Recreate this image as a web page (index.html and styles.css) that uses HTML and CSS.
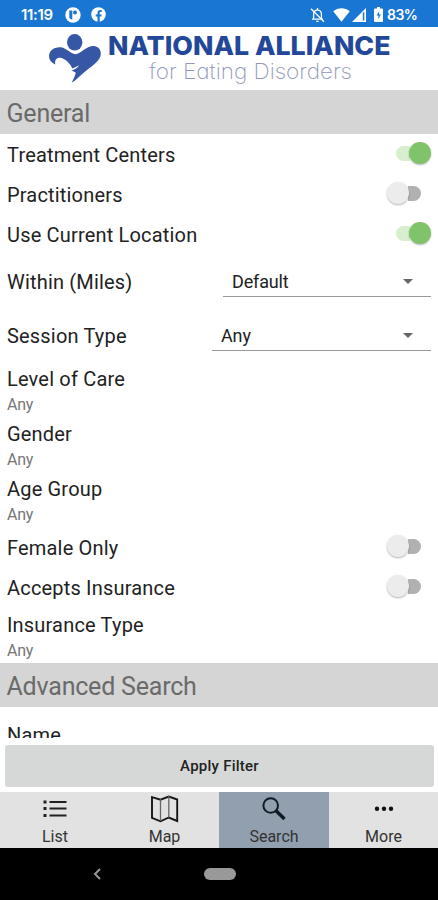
FILE: index.html
```html
<!DOCTYPE html>
<html lang="en">
<head>
<meta charset="utf-8">
<title>Search filters</title>
<link rel="stylesheet" href="styles.css">
</head>
<body>
<div class="app">
  <header class="status">
    <span class="clock">11:19</span>
    <svg class="badge-r" width="16" height="16" viewBox="0 0 16 16"><circle cx="8" cy="8" r="7.700" fill="#fff"/><path d="M4.300 3.400h3v9.300q-1.800-.3-3-1.700z" fill="#1976d2"/><circle cx="10" cy="5.600" r="2" fill="#1976d2"/></svg>
    <svg class="badge-f" width="15" height="15" viewBox="0 0 15 15"><circle cx="7.500" cy="7.500" r="7.300" fill="#fff"/><path d="M6.500 15V9.600H4.700V7.400h1.800V6c0-2 1.100-2.900 2.800-2.900h1.400v2H9.700c-.8 0-1 .4-1 1v1.300h2l-.3 2.200H8.700V15z" fill="#1976d2"/></svg>
    <span class="spacer"></span>
    <svg class="bell" width="15" height="16" viewBox="0 0 15 16" fill="none" stroke="#fff" stroke-width="1.300"><path d="M2 12.200h11M3.600 12V7.200C3.600 4.600 5 3.100 7.500 3.100s3.900 1.500 3.900 4.100V12"/><path d="M7.500 1v2M6.300 14.300h2.400"/><path d="M1 1.800l13 13"/></svg>
    <svg class="wifi" width="17" height="14" viewBox="0 0 17 14"><path d="M8.500 13.700L.2 3.200C4.800-.8 12.200-.8 16.800 3.200z" fill="#fff"/></svg>
    <svg class="signal" width="14" height="14" viewBox="0 0 14 14"><path d="M14 0v14H0z" fill="#fff"/><path d="M10.800 5v7.500h1.500V3.500z" fill="#1976d2"/></svg>
    <svg class="battery" width="9" height="15" viewBox="0 0 9 15"><path d="M3 0h3v1.500h2q1 0 1 1V14q0 1-1 1H1q-1 0-1-1V2.500q0-1 1-1h2z" fill="#fff"/><path d="M5.100 4.300L2.600 8.600h1.800v3.600l2.400-4.600H5.100z" fill="#1976d2"/></svg>
    <span class="percent">83%</span>
  </header>

  <div class="brand">
    <svg width="438" height="63" viewBox="0 27 438 63">
      <g fill="#3557a5">
        <ellipse cx="74.700" cy="42.300" rx="7.700" ry="8.300"/>
        <path d="M49.200 58C48 50 55 46.500 61 47.300C67 48.200 70 53.700 75.500 54.200C81 53.800 85 47.300 92 46.100C99 45.300 102 51 100.400 56.500C98 63 89.500 67.500 84 72.500C79 77 76 80 71.600 82.800C74 78 75.500 75 75.700 72.500L71.500 70.500C74.500 69.500 77 68.500 79.300 65.300L72.500 68.600C70.500 64 65.500 58.500 60.500 57.700C56.500 57.400 54.500 59.500 55.300 64.500C52 63 50 61 49.200 58Z"/>
      </g>
      <text class="brand-name" x="108" y="54.800" textLength="282.500" lengthAdjust="spacingAndGlyphs">NATIONAL ALLIANCE</text>
      <text class="brand-sub" x="149" y="79" textLength="203" lengthAdjust="spacingAndGlyphs">for Eating Disorders</text>
    </svg>
  </div>

  <main class="filters">
    <h2 class="section">General</h2>
    <div class="row"><span class="label">Treatment Centers</span><span class="switch on"><i></i></span></div>
    <div class="row"><span class="label">Practitioners</span><span class="switch"><i></i></span></div>
    <div class="row"><span class="label">Use Current Location</span><span class="switch on"><i></i></span></div>
    <div class="row select-row"><span class="label">Within (Miles)</span><span class="select miles">Default<b class="caret"></b></span></div>
    <div class="row select-row"><span class="label">Session Type</span><span class="select session">Any<b class="caret"></b></span></div>
    <div class="pick"><span class="label">Level of Care</span><span class="value">Any</span></div>
    <div class="pick"><span class="label">Gender</span><span class="value">Any</span></div>
    <div class="pick"><span class="label">Age Group</span><span class="value">Any</span></div>
    <div class="row"><span class="label">Female Only</span><span class="switch"><i></i></span></div>
    <div class="row"><span class="label">Accepts Insurance</span><span class="switch"><i></i></span></div>
    <div class="pick insurance"><span class="label">Insurance Type</span><span class="value">Any</span></div>
    <h2 class="section">Advanced Search</h2>
    <div class="pick name"><span class="label">Name</span></div>
  </main>

  <div class="action"><button class="apply">Apply Filter</button></div>

  <nav class="tabs">
    <div class="tab">
      <svg width="30" height="30" viewBox="0 0 30 30" stroke="#222" stroke-width="2"><path d="M9.500 8H26.500M9.500 14.500H26.500M9.500 21.500H26.500"/><path d="M3.500 8h3M3.500 14.500h3M3.500 21.500h3" stroke-width="3"/></svg>
      <span>List</span>
    </div>
    <div class="tab">
      <svg width="30" height="30" viewBox="0 0 30 30" fill="none" stroke="#161616" stroke-width="1.900"><path d="M2 3.200L10.500 5.700 18.800 2.600 27.200 5.500V27L18.800 23.500 10.500 27.300 2 23.800z"/><path d="M10.500 5.200V27M18.800 2.300V23.500" stroke="#666" stroke-width="1.300"/></svg>
      <span>Map</span>
    </div>
    <div class="tab active">
      <svg width="30" height="30" viewBox="0 0 30 30" fill="none" stroke="#111a22"><circle cx="11.700" cy="11.500" r="7.300" stroke-width="2"/><path d="M17 16.700L25.500 25" stroke-width="3.400"/></svg>
      <span>Search</span>
    </div>
    <div class="tab">
      <svg width="30" height="30" viewBox="0 0 30 30" fill="#111"><circle cx="8" cy="14.800" r="2.200"/><circle cx="15" cy="14.800" r="2.200"/><circle cx="22" cy="14.800" r="2.200"/></svg>
      <span>More</span>
    </div>
  </nav>

  <footer class="system">
    <svg class="back" width="10" height="14" viewBox="0 0 10 14" fill="none" stroke="#999" stroke-width="2"><path d="M8 2L3 7l5 5"/></svg>
    <span class="home"></span>
  </footer>
</div>
</body>
</html>
```
FILE: styles.css
```css
* { box-sizing: border-box; }
body { margin: 0; background: #fff; font-family: Roboto, sans-serif; color: #222; }
.app { width: 438px; height: 900px; display: flex; flex-direction: column; overflow: hidden; }
svg { display: block; flex: none; }

.status { height: 27px; flex: none; display: flex; align-items: center; padding: 2px 20px 0 21px; background: #1976d2; color: #fff; font: 600 15px/25px Inter, sans-serif; }
.clock { width: 44px; letter-spacing: -0.3px; }
.badge-f { margin-left: 10px; }
.spacer { flex: 1; }
.wifi { margin-left: 8px; }
.signal { margin-left: 2px; }
.battery { margin-left: 8px; }
.percent { width: 31px; margin-left: 4px; font-size: 14px; letter-spacing: -0.5px; }

.brand { height: 63px; flex: none; }
.brand-name { font: 800 26px Inter, sans-serif; fill: #234799; }
.brand-sub { font: 200 21px Inter, sans-serif; font-feature-settings: "cv11"; fill: #9098bd; }

.filters { height: 648px; flex: none; overflow: hidden; }
.section { height: 44px; margin: 0; padding: 1px 6.5px 0; background: #d5d5d5; color: #6a6a6a; font-size: 25px; font-weight: 400; line-height: 45px; letter-spacing: -0.2px; }
.row { height: 40px; display: flex; justify-content: space-between; align-items: center; padding: 2px 7px 0; }
.label { font-size: 20px; line-height: 24px; letter-spacing: 0.18px; white-space: nowrap; }
.switch { width: 44px; height: 24px; display: flex; align-items: center; margin-bottom: 4px; }
.switch::after { content: ""; width: 13px; height: 15px; border-radius: 0 8px 8px 0; background: #b1b1b1; }
.switch i { width: 22px; height: 22px; margin-right: -1px; border-radius: 50%; background: #ececec; box-shadow: 0 1px 2px rgba(0, 0, 0, 0.3); z-index: 1; }
.switch.on { flex-direction: row-reverse; }
.switch.on::after { width: 14px; border-radius: 8px 0 0 8px; background: #d8efcf; }
.switch.on i { margin: 0 0 0 -1px; background: #7fc36b; }

.select-row { height: 54px; padding-top: 2px; }
.select { height: 29px; display: flex; align-items: center; justify-content: space-between; padding: 0 18px 0 9px; border-bottom: 1.5px solid #999; font-size: 18px; line-height: 24px; letter-spacing: -0.15px; }
.miles { width: 208px; }
.session { width: 219px; }
.caret { width: 0; height: 0; border: 5px solid transparent; border-top-color: #666; border-bottom: 0; }

.pick { height: 55px; padding: 5px 7px 0; display: flex; flex-direction: column; }
.value { margin-top: 2px; color: #777; font-size: 16px; line-height: 24px; letter-spacing: -0.2px; }
.insurance { height: 56px; padding-top: 6px; }
.name { padding-top: 16px; }

.action { height: 54px; flex: none; padding: 7px 4px 5px 5px; }
.apply { display: block; width: 100%; height: 42px; border: 0; border-radius: 3px; background: #d6d8d7; color: #222; font: 500 15px Roboto, sans-serif; letter-spacing: 0.25px; }

.tabs { height: 56px; flex: none; display: grid; grid-template-columns: 110px 109px 110px 109px; background: #e2e2e2; }
.tab { display: flex; flex-direction: column; align-items: center; padding-top: 2px; font-size: 16px; line-height: 26px; color: #333; }
.active { background: #919fae; }

.system { flex: 1; display: flex; align-items: center; background: #000; }
.back { margin-left: 92px; }
.home { width: 32px; height: 12px; margin-left: 102px; border-radius: 6px; background: #999; }
```
